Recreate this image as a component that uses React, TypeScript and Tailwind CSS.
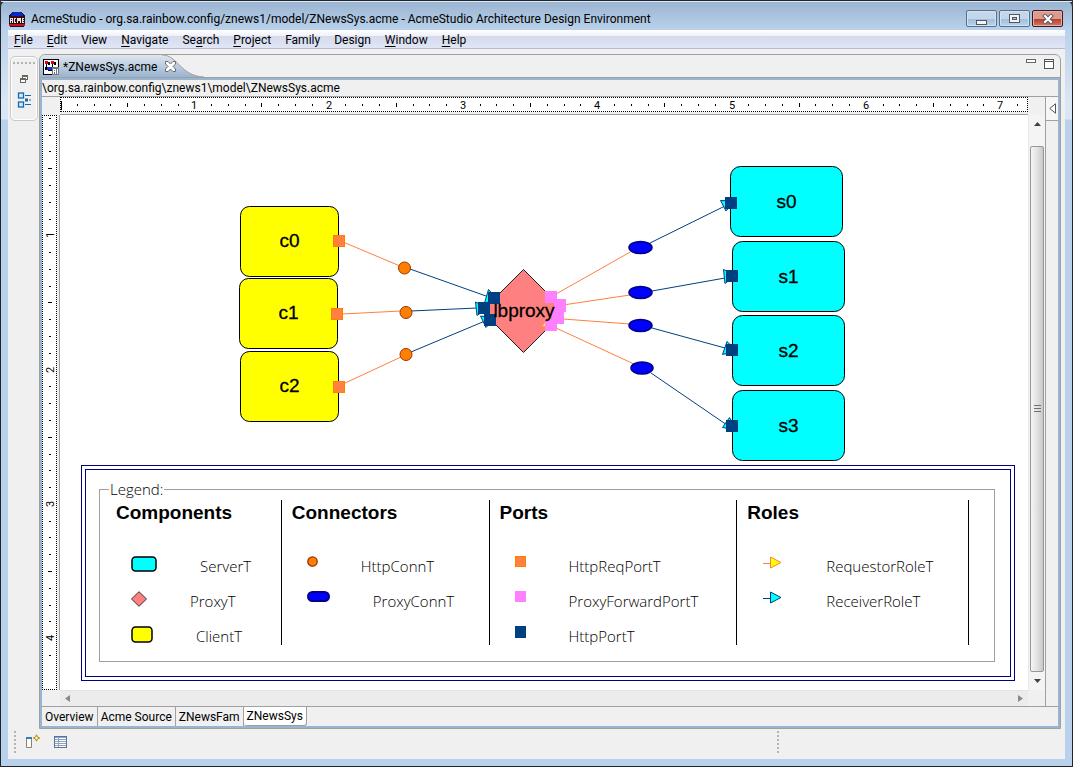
import React from "react";

const UI = "font-['Roboto','Open_Sans',sans-serif]";
const LABEL = "font-['Open_Sans','Noto_Sans',sans-serif]";
const ARIAL = "font-['Liberation_Sans',Arial,sans-serif]";

const menus: [string, number][] = [
  ["File", 0],
  ["Edit", 0],
  ["View", -1],
  ["Navigate", 0],
  ["Search", 2],
  ["Project", 0],
  ["Family", -1],
  ["Design", -1],
  ["Window", 0],
  ["Help", 0],
];

function MenuLabel({ text, mnemonic }: { text: string; mnemonic: number }) {
  if (mnemonic < 0) return <>{text}</>;
  return (
    <>
      {text.slice(0, mnemonic)}
      <span className="underline underline-offset-2">{text[mnemonic]}</span>
      {text.slice(mnemonic + 1)}
    </>
  );
}

function TitleBar() {
  return (
    <header className="flex h-[28px] shrink-0 items-center pl-[8px] pr-[9px] pt-[5px]">
      <svg width="16" height="16" viewBox="0 0 16 16" shapeRendering="crispEdges" aria-hidden="true">
        <path d="M3 1h10l3 4v9l-1 2H1l-1-2V5z" fill="#1a1030" />
        <path d="M4 1h8l2 3v2H2V4z" fill="#0828c8" />
        <path d="M1 5h14v9H1z" fill="#3a0c10" />
        <path d="M0 13h16v2H0z" fill="#c01818" />
        <path d="M1.500 12V7.500h2V12M1 9.500h3M7 7.500H5.500v4H7M8.500 12V7.500h1v2h1v-2h1V12M15 7.500h-1.500v4H15M13 9.500h2" stroke="#e8e8e8" fill="none" />
      </svg>
      <h1 className="ml-[6px] flex-1 whitespace-nowrap text-[12px] leading-[16px] text-black">
        AcmeStudio - org.sa.rainbow.config/znews1/model/ZNewsSys.acme - AcmeStudio Architecture Design Environment
      </h1>
      <div className="flex gap-[2px]">
        <button aria-label="Minimize" className="flex h-[17px] w-[31px] items-center justify-center rounded-[2px] border border-[#566f90] bg-[linear-gradient(#c3d6ea_50%,#9fbcda_51%,#b9d3ec)] shadow-[inset_0_0_0_1px_#d3e2f1]">
          <svg width="12" height="12" viewBox="0 0 12 12" shapeRendering="crispEdges"><rect x=".5" y="7.500" width="10" height="4" fill="#f4f4f4" stroke="#535666" /></svg>
        </button>
        <button aria-label="Maximize" className="flex h-[17px] w-[31px] items-center justify-center rounded-[2px] border border-[#566f90] bg-[linear-gradient(#c3d6ea_50%,#9fbcda_51%,#b9d3ec)] shadow-[inset_0_0_0_1px_#d3e2f1]">
          <svg width="12" height="10" viewBox="0 0 12 10" shapeRendering="crispEdges">
            <rect x=".5" y="0.500" width="10" height="8" fill="#f4f4f4" stroke="#535666" />
            <rect x="3.500" y="3.500" width="4" height="2" fill="#a9c4e4" stroke="#535666" />
          </svg>
        </button>
        <button aria-label="Close" className="flex h-[17px] w-[31px] items-center justify-center rounded-[2px] border border-[#431422] bg-[linear-gradient(#dd9a8e_50%,#b83a26_51%,#d27a64)] shadow-[inset_0_0_0_1px_#e5b0a5]">
          <svg width="12" height="10" viewBox="0 0 12 10">
            <path d="M3 2l6 6M9 2l-6 6" stroke="#535666" strokeWidth="4" strokeLinecap="square" />
            <path d="M3 2l6 6M9 2l-6 6" stroke="#fff" strokeWidth="2.200" strokeLinecap="square" />
          </svg>
        </button>
      </div>
    </header>
  );
}

function MenuBar() {
  return (
    <nav className="flex h-[19px] shrink-0 items-center gap-[14px] border-b border-[#b6bccc] bg-[linear-gradient(#fff,#eef0f8_35%,#d5dbed_36%,#e1e6f6)] pl-[6px] pt-[2px]">
      {menus.map(([text, m]) => (
        <button key={text} className="text-[12px] leading-[18px] text-black">
          <MenuLabel text={text} mnemonic={m} />
        </button>
      ))}
    </nav>
  );
}

function FastViewBar() {
  return (
    <aside className="mt-[7px] flex h-[65px] w-[28px] shrink-0 flex-col items-center rounded-[5px] border border-[#c8c8c8] bg-[#f0f0f0] pt-[4px] shadow-[inset_0_0_0_1px_#fff]">
      <svg width="24" height="4" viewBox="0 0 24 4" shapeRendering="crispEdges" aria-hidden="true">
        {[0, 4, 8, 12, 16, 20].map((x) => (
          <rect key={x} x={x + 1} y="1" width="2" height="2" fill="#b4b4b4" />
        ))}
      </svg>
      <button aria-label="Restore" className="mt-[10px]">
        <svg className="block" width="10" height="9" viewBox="0 0 10 9" shapeRendering="crispEdges">
          <path d="M3.500 1.500h5v3h-5zM3 .5h6" fill="#fff" stroke="#6b665c" />
          <path d="M1.500 4.500h5v3h-5zM1 3.500h6" fill="#fff" stroke="#6b665c" />
        </svg>
      </button>
      <button aria-label="Outline" className="mt-[8px]">
        <svg className="block" width="15" height="16" viewBox="0 0 15 16">
          <rect x="1.500" y="1" width="5" height="5" fill="#cdeafc" stroke="#1569ae" strokeWidth="1.300" />
          <rect x="1.500" y="10" width="5" height="5" fill="#cdeafc" stroke="#1569ae" strokeWidth="1.300" />
          <rect x="8.500" y="7" width="2" height="2" fill="#fff" stroke="#1569ae" />
          <path d="M8 3.500h6M12 8h2M8 12.500h6" stroke="#1569ae" />
        </svg>
      </button>
    </aside>
  );
}

function EditorTabStrip() {
  return (
    <div className="flex h-[22px] shrink-0 items-start justify-between">
      <div className="relative h-[22px] w-[164px]">
        <svg className="absolute left-0 top-0" width="164" height="22" viewBox="0 0 164 22" aria-hidden="true">
          <defs>
            <linearGradient id="tab" x1="0" y1="0" x2="0" y2="1">
              <stop offset="0" stopColor="#dfe6ee" />
              <stop offset="1" stopColor="#99b4d1" />
            </linearGradient>
          </defs>
          <path d="M0 22V5Q1 0 6 0H122C138 0 140 21 164 22z" fill="url(#tab)" />
          <path d="M122 0C138 0 140 21 164 22" fill="none" stroke="#a0a0a0" />
        </svg>
        <div className="relative flex h-full items-center pl-[3px] pt-px">
          <svg width="16" height="16" viewBox="0 0 16 16" shapeRendering="crispEdges" aria-hidden="true">
            <rect x=".5" y=".5" width="15" height="15" fill="#fff" stroke="#000" />
            <path d="M2 2h3v3H2zM8 2h3v3H8z" fill="#e00010" />
            <path d="M5 3h2v3H5zM11 3h2v3h-2z" fill="#000" />
            <path d="M3.500 5v4M9.500 5v3" stroke="#000" />
            <path d="M4 8h6v3H4z" fill="#1030e0" />
            <path d="M2 8h2v3H2zM5 11h4v1H5z" fill="#000" />
            <path d="M9 8h7v8H9z" fill="#6f7480" />
            <path d="M10.500 15v-4.500h2V15M10 12.500h3M15 10.500h-.5v4h.5" fill="none" stroke="#fff" />
          </svg>
          <button className="ml-[4px] whitespace-nowrap text-[12px] leading-[16px] text-black">*ZNewsSys.acme</button>
          <button aria-label="Close editor" className="ml-[8px]">
            <svg className="block" width="11" height="11" viewBox="0 0 11 11">
              <path d="M.5.5h2.500l2.500 2.500L8 .5h2.500V3L8 5.500 10.500 8v2.500H8L5.500 8 3 10.500H.5V8L3 5.500.5 3z" fill="#fff" stroke="#6a6a6a" />
            </svg>
          </button>
        </div>
      </div>
      <div className="flex items-start gap-[8px] pr-[6px] pt-[4px]">
        <button aria-label="Minimize view">
          <svg className="block" width="10" height="4" viewBox="0 0 10 4" shapeRendering="crispEdges"><rect x=".5" y=".5" width="9" height="3" fill="#fff" stroke="#666" /></svg>
        </button>
        <button aria-label="Maximize view">
          <svg className="block" width="10" height="10" viewBox="0 0 10 10" shapeRendering="crispEdges"><path d="M.5.5h9v9h-9zM0 2.500h10" fill="#fff" stroke="#555" /></svg>
        </button>
      </div>
    </div>
  );
}

const INCH = 134.3;
const horizontalTicks = Array.from({ length: 57 }, (_, i) => i + 1);
const verticalTicks = Array.from({ length: 34 }, (_, i) => i);

function HorizontalRuler() {
  return (
    <div className="h-[15px] overflow-hidden border border-dotted border-black bg-white">
      <svg className="block h-[13px] w-full" shapeRendering="crispEdges" aria-label="Horizontal ruler">
        <path d="M.5 3v9" stroke="#000" />
        {horizontalTicks.map((i) => {
          const x = Math.round((i * INCH) / 8) - 1;
          if (i % 8 === 0)
            return (
              <text key={i} x={x} y="11" fontSize="11" textAnchor="middle" fill="#000">{i / 8}</text>
            );
          return <rect key={i} x={x} y={i % 4 === 0 ? 5 : 6} width="1" height={i % 4 === 0 ? 4 : 2} fill="#000" />;
        })}
      </svg>
    </div>
  );
}

function VerticalRuler() {
  return (
    <div className="relative w-[15px] overflow-hidden border border-dotted border-black bg-white">
      <svg className="absolute left-0 top-0 h-full w-[13px]" shapeRendering="crispEdges" aria-label="Vertical ruler">
        {verticalTicks.map((i) => {
          const y = Math.round((i * INCH) / 8) - 15;
          if (y < 0) return null;
          if (i % 8 === 0)
            return (
              <text key={i} transform={`translate(11 ${y}) rotate(-90)`} fontSize="11" textAnchor="middle" fill="#000">{i / 8}</text>
            );
          return <rect key={i} x={i % 4 === 0 ? 5 : 6} y={y} width={i % 4 === 0 ? 4 : 2} height="1" fill="#000" />;
        })}
      </svg>
    </div>
  );
}

const ORANGE = "#ff8040";
const NAVY = "#004080";

const clients = [
  { id: "c0", x: 240.5, y: 206.5 },
  { id: "c1", x: 239.5, y: 278.5 },
  { id: "c2", x: 240.5, y: 351.5 },
];
const servers = [
  { id: "s0", x: 730.5, y: 166.5 },
  { id: "s1", x: 732.5, y: 241.5 },
  { id: "s2", x: 732.5, y: 315.5 },
  { id: "s3", x: 732.5, y: 390.5 },
];

function Diagram() {
  return (
    <svg className={`block h-[350px] w-[968px] ${ARIAL}`} viewBox="60 115 968 350" fontSize="19" aria-label="ZNewsSys architecture">
      {clients.map((c) => (
        <g key={c.id}>
          <rect x={c.x} y={c.y} width="98" height="70" rx="9" fill="#ff0" stroke="#000" />
          <text x={c.x + 49} y={c.y + 40} textAnchor="middle" stroke="#000" strokeWidth=".3">{c.id}</text>
        </g>
      ))}
      {servers.map((s) => (
        <g key={s.id}>
          <rect x={s.x} y={s.y} width="112" height="70" rx="10" fill="#0ff" stroke="#000" />
          <text x={s.x + 56} y={s.y + 41} textAnchor="middle" stroke="#000" strokeWidth=".3">{s.id}</text>
        </g>
      ))}
      <path d="M523.500 269.500L565 311 523.500 352.500 482 311z" fill="#ff8080" stroke="#202020" />
      <g stroke={ORANGE} fill="none">
        <path d="M343 242L400 266M342 314L401 311M343 384L401 357" />
        <path d="M556 294L632 251M563 305L630 295M563 319L630 324M556 328L634 364" />
      </g>
      <g stroke={NAVY} fill="none">
        <path d="M410 269L486 296M411 311L477 308M411 352L485 321" />
        <path d="M650 243L725 206M652 291L725 278M652 328L725 348M651 373L727 425" />
      </g>

      <g fill="#0ff" stroke={NAVY}>
        <path d="M720.500 200.500L726 211 735 201z" />
        <path d="M723.500 269.500L725 283.500 736 275z" />
        <path d="M727 341.500L722.500 354.500 737 351z" />
        <path d="M729.500 417.500L722.500 427.500 737 430z" />
        <path d="M488.500 289.500L484.500 303 498 300z" />
        <path d="M475.500 302L477 315.500 488 308z" />
        <path d="M480.500 316L486 327.500 495 318z" />
      </g>
      <path d="M542 326.500L549 316.500 555 327z" fill="#ff0" stroke="#ffa020" />

      <g fill="#ff8040" stroke="#ff8000">
        <rect x="333.500" y="235.500" width="11" height="11" />
        <rect x="331.500" y="308.500" width="11" height="11" />
        <rect x="333.500" y="381.500" width="11" height="11" />
      </g>
      <g fill={NAVY}>
        <rect x="725" y="197" width="12" height="12" />
        <rect x="726" y="270" width="12" height="12" />
        <rect x="726" y="344" width="12" height="12" />
        <rect x="726" y="420" width="12" height="12" />
        <rect x="488" y="292" width="12" height="12" />
        <rect x="478" y="302" width="12" height="12" />
        <rect x="484" y="314" width="12" height="12" />
      </g>
      <g fill="#ff80ff">
        <rect x="545" y="291" width="12" height="12" />
        <rect x="554" y="299" width="12" height="13" />
        <rect x="552" y="311" width="12" height="13" />
        <rect x="545" y="319" width="12" height="12" />
      </g>
      <text x="524" y="317" textAnchor="middle" stroke="#000" strokeWidth=".3">lbproxy</text>
      <g fill="#ff8000" stroke="#a03000">
        <circle cx="404.500" cy="268" r="6" />
        <circle cx="406" cy="312.500" r="6" />
        <circle cx="406" cy="354.500" r="6" />
      </g>
      <g fill="#00f" stroke="#00008a" strokeWidth="1.500">
        <ellipse cx="640.500" cy="247.500" rx="11.500" ry="6" />
        <ellipse cx="640.500" cy="292.500" rx="11.500" ry="6" />
        <ellipse cx="640.500" cy="325.500" rx="11.500" ry="6" />
        <ellipse cx="642" cy="368" rx="11" ry="6" />
      </g>
    </svg>
  );
}

type Entry = { label: string; icon: React.ReactNode };

const legend: { title: string; entries: Entry[] }[] = [
  {
    title: "Components",
    entries: [
      { label: "ServerT", icon: <svg width="26" height="16"><rect x="1" y="1" width="24" height="14" rx="3.500" fill="#0ff" stroke="#000" strokeWidth="1.500" /></svg> },
      { label: "ProxyT", icon: <svg width="16" height="16"><path d="M8 .7L15.500 8 8 15.300.5 8z" fill="#ff8080" stroke="#303030" /></svg> },
      { label: "ClientT", icon: <svg width="22" height="17"><rect x="1" y="1" width="20" height="15" rx="3.500" fill="#ff0" stroke="#000" strokeWidth="1.500" /></svg> },
    ],
  },
  {
    title: "Connectors",
    entries: [
      { label: "HttpConnT", icon: <svg width="11" height="11"><circle cx="5.500" cy="5.500" r="4.700" fill="#ff8000" stroke="#a03000" strokeWidth="1.300" /></svg> },
      { label: "ProxyConnT", icon: <svg width="23" height="11"><rect x="1" y="1" width="21" height="9" rx="4.500" fill="#00f" stroke="#00008a" strokeWidth="2" /></svg> },
    ],
  },
  {
    title: "Ports",
    entries: [
      { label: "HttpReqPortT", icon: <svg width="11" height="11"><rect x=".5" y=".5" width="10" height="10" fill="#ff8040" stroke="#ff8000" /></svg> },
      { label: "ProxyForwardPortT", icon: <svg width="11" height="11"><rect width="11" height="11" fill="#ff80ff" /></svg> },
      { label: "HttpPortT", icon: <svg width="11" height="12"><rect width="11" height="12" fill="#004080" /></svg> },
    ],
  },
  {
    title: "Roles",
    entries: [
      { label: "RequestorRoleT", icon: <svg width="21" height="13"><path d="M1 7.500h7" stroke="#ff8040" /><path d="M8.500 1L19 6.500 8.500 12z" fill="#ff0" stroke="#ff8040" /></svg> },
      { label: "ReceiverRoleT", icon: <svg width="21" height="13"><path d="M1 7.500h7" stroke="#004080" /><path d="M8.500 1L19 6.500 8.500 12z" fill="#0ff" stroke="#004080" /></svg> },
    ],
  },
];

function Legend() {
  return (
    <section className={`ml-[21px] mr-[13px] border border-[#000080] p-[3px] ${LABEL}`}>
      <div className="border border-[#000080] pb-[14px] pl-[13px] pr-[15px] pt-[10px]">
        <fieldset className="border border-[#a0a0a0] pb-[16px] pr-[25px]">
          <legend className="ml-[9px] px-px text-[15px] font-light leading-[18px] text-black">Legend:</legend>
          <div className="mt-[2px] grid grid-cols-[182fr_208fr_248fr_232fr]">
            {legend.map((column, index) => (
              <div key={column.title} className={`h-[145px] border-r border-black ${index === 0 ? "pl-[16px]" : "pl-[10px]"}`}>
                <h2 className={`text-[19px] font-bold leading-[26px] text-black ${ARIAL}`}>{column.title}</h2>
                <ul className="mt-[30px] pl-[15px]">
                  {column.entries.map((entry) => (
                    <li key={entry.label} className="flex h-[35px] items-start gap-[43px]">
                      {entry.icon}
                      <span className="text-[15px] font-light leading-[20px] text-black">{entry.label}</span>
                    </li>
                  ))}
                </ul>
              </div>
            ))}
          </div>
        </fieldset>
      </div>
    </section>
  );
}

function VerticalScrollbar() {
  return (
    <div className="flex flex-col items-center border-l border-[#e8e8e8] bg-[#f4f4f4]">
      <button aria-label="Scroll up" className="flex h-[31px] w-full justify-center pt-[7px]">
        <svg width="7" height="4" viewBox="0 0 7 4"><path d="M0 4L3.500 0 7 4z" fill="#404040" /></svg>
      </button>
      <div className="flex w-[14px] flex-1 items-center justify-center rounded-[2px] border border-[#979797] bg-linear-to-r from-[#f5f5f5] via-[#e2e2e4] to-[#c8c8cc]">
        <svg width="7" height="8" viewBox="0 0 7 8" shapeRendering="crispEdges"><path d="M0 .5h7M0 3.500h7M0 6.500h7" stroke="#707070" /></svg>
      </div>
      <button aria-label="Scroll down" className="flex h-[18px] w-full items-center justify-center">
        <svg width="7" height="4" viewBox="0 0 7 4"><path d="M0 0L3.500 4 7 0z" fill="#404040" /></svg>
      </button>
    </div>
  );
}

const pages = ["Overview", "Acme Source", "ZNewsFam", "ZNewsSys"];

function Editor() {
  return (
    <section className="mr-[4px] flex min-w-0 flex-1 flex-col overflow-hidden rounded-t-[6px] border border-[#a0a0a0]">
      <EditorTabStrip />
      <div className="flex flex-1 flex-col border-t border-[#a0a0a0]">
        <div className="flex flex-1 flex-col border-2 border-[#99b4d1] bg-[#f0f0f0]">
          <p className="h-[16px] whitespace-nowrap text-[12px] leading-[16px] text-black">\org.sa.rainbow.config\znews1\model\ZNewsSys.acme</p>
          <div className="flex flex-1 border-y border-[#a0a0a0]">
            <div className="grid min-w-0 flex-1 grid-cols-[18px_minmax(0,1fr)_17px] grid-rows-[18px_1fr_16px]">
              <div />
              <div className="border-b border-[#a0a0a0]"><HorizontalRuler /></div>
              <div />
              <div className="flex border-r border-[#a0a0a0]"><VerticalRuler /></div>
              <main className="overflow-hidden bg-white pb-[9px]">
                <Diagram />
                <Legend />
              </main>
              <VerticalScrollbar />
              <div />
              <div className="flex items-center justify-between border-t border-[#e2e2e2] bg-[#ececec] px-[5px]">
                <button aria-label="Scroll left"><svg className="block" width="5" height="7" viewBox="0 0 5 7"><path d="M5 0v7L0 3.500z" fill="#8a8a8a" /></svg></button>
                <button aria-label="Scroll right"><svg className="block" width="5" height="7" viewBox="0 0 5 7"><path d="M0 0v7l5-3.500z" fill="#8a8a8a" /></svg></button>
              </div>
              <div />
            </div>
            <div className="w-[13px] border-l border-[#a0a0a0] bg-[#f0f0f0]">
              <button aria-label="Show palette" className="flex h-[24px] w-full items-center justify-center border-b border-[#a0a0a0] bg-[#f6f6f6]">
                <svg width="7" height="11" viewBox="0 0 7 11"><path d="M6.500.8v9.400L.8 5.500z" fill="#fff" stroke="#555" /></svg>
              </button>
            </div>
          </div>
          <div className="flex h-[19px]">
            {pages.map((page) => (
              <button
                key={page}
                className={
                  page === "ZNewsSys"
                    ? "rounded-b-[3px] border-b border-r border-[#a0a0a0] bg-white px-[3px] text-[12px] leading-[16px] text-black"
                    : "border-r border-[#a0a0a0] px-[3px] text-[12px] leading-[16px] text-black"
                }
              >
                {page}
              </button>
            ))}
          </div>
        </div>
      </div>
    </section>
  );
}

function Grip() {
  return (
    <svg width="3" height="22" viewBox="0 0 3 22" shapeRendering="crispEdges" aria-hidden="true">
      {[0, 4, 8, 12, 16, 20].map((y) => (
        <rect key={y} x="0" y={y} width="2" height="2" fill="#b4b4b4" />
      ))}
    </svg>
  );
}

function StatusBar() {
  return (
    <footer className="flex h-[30px] shrink-0 items-center pb-[4px] pl-[6px]">
      <Grip />
      <button aria-label="New fast view" className="ml-[8px]">
        <svg className="block" width="17" height="16" viewBox="0 0 17 16">
          <path d="M1.500 3.500h5v10h-5z" fill="#fff" stroke="#8a8468" />
          <path d="M1 3h6v2H1z" fill="#2f7fc0" />
          <path d="M11.500.8l1 2.200 2.200 1-2.200 1-1 2.200-1-2.200-2.200-1 2.200-1z" fill="#fff3b0" stroke="#b08a18" />
        </svg>
      </button>
      <button aria-label="Show view" className="ml-[12px]">
        <svg className="block" width="13" height="12" viewBox="0 0 13 12" shapeRendering="crispEdges">
          <rect x=".5" y=".5" width="12" height="11" fill="#fff" stroke="#5b7396" />
          <path d="M1 1.500h11" stroke="#8aa4c8" />
          <path d="M1 3.500h11M1 5.500h11M1 7.500h11M1 9.500h11M4.500 1v10" stroke="#8ba3c0" />
        </svg>
      </button>
      <div className="flex-1" />
      <div className="mr-[285px] flex"><Grip /></div>
    </footer>
  );
}

export default function App() {
  return (
    <div className={`flex min-h-screen bg-[#30303a] ${UI}`}>
      <div className="flex min-w-0 flex-1 flex-col rounded-t-[7px] border border-[#20242c] bg-[#b9d1ea] bg-[linear-gradient(#99b4d1,#b9d1ea_28px,#d9e6f5_100px,#d9e6f5_118px,#b9d1ea_119px)] pb-px">
        <div className="flex flex-1 flex-col border-t border-[#dfe9f4]">
          <TitleBar />
          <div className="mx-[7px] mb-[6px] flex flex-1 flex-col bg-[#f0f0f0]">
            <MenuBar />
            <div className="flex flex-1 gap-px pl-[2px]">
              <FastViewBar />
              <div className="flex min-w-0 flex-1 pt-[5px]">
                <Editor />
              </div>
            </div>
            <StatusBar />
          </div>
        </div>
      </div>
    </div>
  );
}
